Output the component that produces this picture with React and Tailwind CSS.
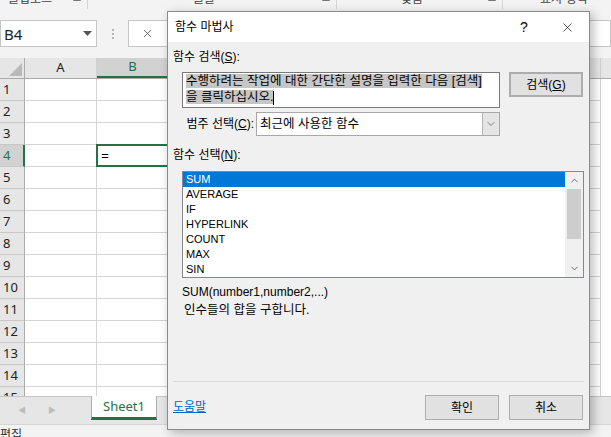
import React from 'react';
import { ChevronDown, ChevronUp, X } from 'lucide-react';

const COLS = ['A', 'B', 'C', 'D', 'E', 'F', 'G', 'H'];
const ROWS = Array.from({ length: 15 }, (_, i) => i + 1);
const FUNCS = ['SUM', 'AVERAGE', 'IF', 'HYPERLINK', 'COUNT', 'MAX', 'SIN'];

function Launcher() {
  return (
    <svg width="8" height="8" viewBox="0 0 8 8" className="shrink-0">
      <path d="M0.5 0.5V7.5H7.5V0.5" fill="none" stroke="#777" strokeWidth="1" />
      <path d="M3 3L6 6M6 3.5V6H3.5" fill="none" stroke="#777" strokeWidth="1" />
    </svg>
  );
}

function RibbonGroup({ label, width, pad, last }) {
  return (
    <div
      className={`flex items-start h-full shrink-0 ${last ? '' : 'border-r border-[#d6d6d6]'}`}
      style={{ width, paddingLeft: pad }}
    >
      <span>{label}</span>
      {!last && (
        <span className="ml-auto mr-[6px] mt-[2px]">
          <Launcher />
        </span>
      )}
    </div>
  );
}

function Btn({ children, className = '' }) {
  return (
    <div
      className={`w-[74px] h-[25px] bg-[#e1e1e1] border border-[#adadad] flex items-center justify-center leading-[16px] ${className}`}
    >
      {children}
    </div>
  );
}

export default function App() {
  return (
    <div className="relative w-[611px] h-[437px] overflow-hidden bg-white font-['Liberation_Sans','Noto_Sans_CJK_KR',sans-serif] text-[12px] text-black">
      {/* Ribbon group labels, cut off at the top */}
      <div className="h-[10px] overflow-hidden bg-[#f3f3f3]">
        <div className="flex h-[18px] -mt-[9px] leading-[16px] text-[#444]">
          <RibbonGroup label="클립보드" width={88} pad={8} />
          <RibbonGroup label="글꼴" width={249} pad={105} />
          <RibbonGroup label="맞춤" width={166} pad={64} />
          <RibbonGroup label="표시 형식" width={108} pad={37} last />
        </div>
      </div>

      {/* Formula bar */}
      <div className="h-[48px] bg-[#f3f3f3] pt-[10px] flex items-start">
        <div className="w-[97px] h-[27px] bg-white border border-[#c6c6c6] flex items-center pl-[3px] pr-[4px]">
          <span className="font-['Noto_Sans',sans-serif] text-[15px] leading-[20px] text-[#222]">B4</span>
          <svg width="9" height="5" viewBox="0 0 9 5" className="ml-auto">
            <path d="M0 0H9L4.5 5Z" fill="#555" />
          </svg>
        </div>
        <div className="w-[31px] h-[27px] flex flex-col items-center justify-center gap-[2px]">
          <span className="w-[2px] h-[2px] bg-[#b5b5b5]" />
          <span className="w-[2px] h-[2px] bg-[#b5b5b5]" />
          <span className="w-[2px] h-[2px] bg-[#b5b5b5]" />
        </div>
        <div className="flex-1 h-[27px] bg-white border border-[#c6c6c6] flex items-center pl-[12px]">
          <X size={13} strokeWidth={1.6} color="#555" />
        </div>
      </div>

      {/* Column headers */}
      <div className="flex h-[21px] bg-[#e6e6e6] border-b border-[#ababab] font-['Noto_Sans',sans-serif] text-[13px] text-[#222]">
        <div className="w-[25px] shrink-0 border-r border-[#ababab] flex items-end justify-end p-[2px]">
          <svg width="13" height="13" viewBox="0 0 13 13">
            <path d="M13 0V13H0Z" fill="#b9b9b9" />
          </svg>
        </div>
        {COLS.map((c) => (
          <div
            key={c}
            className={`w-[72px] shrink-0 border-r border-[#d0d0d0] flex items-center justify-center ${
              c === 'B' ? 'bg-[#d2d2d2] text-[#217346] border-b-2 border-b-[#217346]' : ''
            }`}
          >
            {c}
          </div>
        ))}
      </div>

      {/* Grid */}
      <div className="h-[317px] overflow-hidden">
        {ROWS.map((r) => (
          <div key={r} className="flex h-[22px] font-['Noto_Sans',sans-serif] text-[13px]">
            <div
              className={`w-[25px] shrink-0 border-b border-[#c8c8c8] flex items-center pl-[3px] ${
                r === 4
                  ? 'bg-[#d2d2d2] text-[#217346] border-r-2 border-r-[#217346]'
                  : 'bg-[#e6e6e6] text-[#222] border-r border-r-[#ababab]'
              }`}
            >
              {r}
            </div>
            {COLS.map((c) => (
              <div key={c} className="relative w-[72px] shrink-0 border-r border-b border-[#d4d4d4]">
                {r === 4 && c === 'B' && (
                  <div className="absolute -left-[1px] -top-[1px] -right-[1px] -bottom-[1px] border-2 border-[#217346] flex items-center pl-[3px] text-[14px]">
                    =
                  </div>
                )}
              </div>
            ))}
          </div>
        ))}
      </div>

      {/* Sheet tabs */}
      <div className="h-[28px] bg-[#e6e6e6] border-t border-[#c6c6c6] flex items-start">
        <div className="w-[91px] h-full flex items-center pl-[18px] gap-[22px] text-[#bdbdbd] text-[8px]">
          <span>◀</span>
          <span>▶</span>
        </div>
        <div className="w-[66px] h-[24px] -mt-[1px] bg-white border-x border-[#ababab] border-b-[3px] border-b-[#217346] flex items-center justify-center font-['Noto_Sans',sans-serif] text-[13px] text-[#217346]">
          Sheet1
        </div>
      </div>

      {/* Status bar */}
      <div className="h-[13px] bg-[#f3f3f3] border-t border-[#d6d6d6] leading-[16px] text-[#333]">
        <div className="pt-[2px]">편집</div>
      </div>

      {/* Function wizard dialog */}
      <div className="absolute left-[167px] top-[11px] w-[423px] h-[419px] bg-[#f0f0f0] border border-[#8a8a8a] shadow-[3px_3px_10px_rgba(0,0,0,0.28)] flex flex-col">
        <div className="h-[30px] bg-white flex items-center pl-[7px] shrink-0">
          <span className="leading-[16px]">함수 마법사</span>
          <span className="ml-auto w-[44px] text-center text-[14px] leading-[16px]">?</span>
          <span className="w-[42px] mr-[1px] flex justify-center">
            <X size={15} strokeWidth={1.1} color="#111" />
          </span>
        </div>

        <div className="flex-1 flex flex-col px-[5px]">
          <div className="mt-[7px] leading-[16px]">
            함수 검색(<span className="underline">S</span>):
          </div>

          <div className="mt-[7px] ml-[9px] flex items-start">
            <div className="w-[318px] h-[36px] bg-white border border-[#7a7a7a] pl-[3px] leading-[16px] text-[12.5px] whitespace-nowrap overflow-hidden">
              <span className="bg-[#c6c6c6]">수행하려는 작업에 대한 간단한 설명을 입력한 다음 [검색]</span>
              <br />
              <span className="bg-[#c6c6c6]">을 클릭하십시오.</span>
              <span className="inline-block w-[1px] h-[14px] bg-black align-middle" />
            </div>
            <Btn className="ml-[9px] border-2 border-[#0078d7]">
              검색(<span className="underline">G</span>)
            </Btn>
          </div>

          <div className="mt-[4px] flex items-center h-[24px]">
            <div className="w-[83px] pr-[2px] flex justify-end leading-[16px] whitespace-nowrap">
              <span>
                범주 선택(<span className="underline">C</span>):
              </span>
            </div>
            <div className="w-[244px] h-[24px] bg-white border border-[#a8a8a8] flex items-stretch">
              <span className="flex-1 pl-[3px] flex items-center leading-[16px] text-[12.5px]">최근에 사용한 함수</span>
              <span className="w-[17px] bg-[#e5e5e5] border-l border-[#b5b5b5] flex items-center justify-center">
                <ChevronDown size={12} strokeWidth={1.4} color="#555" />
              </span>
            </div>
          </div>

          <div className="mt-[11px] leading-[16px]">
            함수 선택(<span className="underline">N</span>):
          </div>

          <div className="mt-[8px] ml-[9px] w-[402px] h-[107px] bg-white border border-[#828790] flex">
            <div className="flex-1 flex flex-col text-[11px]">
              {FUNCS.map((f, i) => (
                <div
                  key={f}
                  className={`h-[15px] leading-[15px] pl-[3px] ${i === 0 ? 'bg-[#0078d7] text-white' : ''}`}
                >
                  {f}
                </div>
              ))}
            </div>
            <div className="w-[18px] bg-[#f0f0f0] flex flex-col items-center">
              <div className="h-[17px] flex items-center justify-center">
                <ChevronUp size={11} strokeWidth={2} color="#606060" />
              </div>
              <div className="w-[14px] h-[50px] bg-[#cdcdcd]" />
              <div className="flex-1" />
              <div className="h-[17px] flex items-center justify-center">
                <ChevronDown size={11} strokeWidth={2} color="#606060" />
              </div>
            </div>
          </div>

          <div className="mt-[6px] ml-[9px] leading-[16px]">SUM(number1,number2,...)</div>
          <div className="mt-[2px] ml-[11px] leading-[16px] text-[12.5px]">인수들의 합을 구합니다.</div>

          <div className="flex-1" />
          <div className="border-t border-[#d8d8d8]" />
          <div className="h-[47px] flex items-start pt-[13px]">
            <span className="mt-[4px] leading-[16px] text-[#0066cc] underline">도움말</span>
            <Btn className="ml-auto">확인</Btn>
            <Btn className="ml-[10px] mr-[1px]">취소</Btn>
          </div>
        </div>
      </div>
    </div>
  );
}
